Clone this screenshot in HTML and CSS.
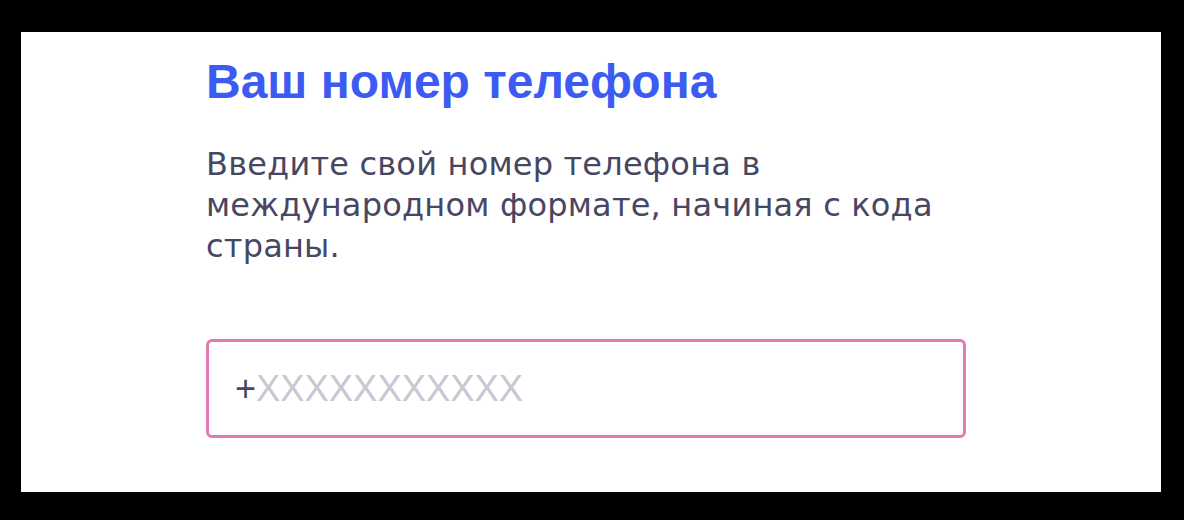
FILE: index.html
```html
<!DOCTYPE html>
<html lang="ru">
<head>
<meta charset="utf-8">
<title>Ваш номер телефона</title>
<link rel="stylesheet" href="styles.css">
</head>
<body>
<div class="panel">
  <div class="content">
    <h1 class="title">Ваш номер телефона</h1>
    <p class="desc">Введите свой номер телефона в международном формате, начиная с кода страны.</p>
    <label class="phone">
      <span class="prefix">+</span>
      <input class="phone-input" type="tel" placeholder="XXXXXXXXXXX">
    </label>
  </div>
</div>
</body>
</html>
```
FILE: styles.css
```css
html, body {
  margin: 0;
  padding: 0;
  background: #000;
}
body {
  width: 1184px;
  height: 520px;
  overflow: hidden;
  font-family: "Liberation Sans", Arial, sans-serif;
}
.panel {
  margin: 32px 0 0 21px;
  width: 1140px;
  height: 460px;
  background: #fff;
  box-sizing: border-box;
  padding: 25px 0 0 185px;
}
.content {
  width: 760px;
}
.title {
  margin: 0;
  font-size: 48px;
  line-height: 50px;
  font-weight: 700;
  color: #3b5bf2;
}
.desc {
  margin: 37px 0 0;
  font-family: "DejaVu Sans", "Liberation Sans", sans-serif;
  font-size: 32px;
  line-height: 41px;
  letter-spacing: 0.2px;
  color: #474763;
}
.phone {
  margin-top: 72px;
  display: flex;
  align-items: center;
  box-sizing: border-box;
  height: 99px;
  border: 3px solid #e17ab0;
  border-radius: 6px;
  padding: 0 26px;
}
.prefix {
  font-size: 36px;
  color: #474763;
}
.phone-input {
  flex: 1;
  min-width: 0;
  border: 0;
  outline: 0;
  padding: 0;
  margin: 0;
  font-family: inherit;
  font-size: 36.4px;
  color: #474763;
  background: transparent;
}
.phone-input::placeholder {
  color: #c8c8d2;
  opacity: 1;
}
```
